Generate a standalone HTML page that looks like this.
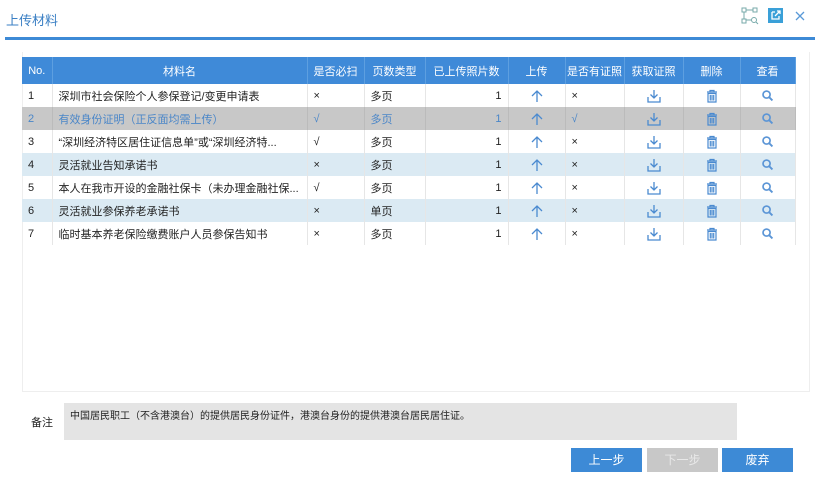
<!DOCTYPE html>
<html><head><meta charset="utf-8"><style>
*{margin:0;padding:0;box-sizing:border-box}
body{width:821px;height:487px;background:#fff;font-family:"Liberation Sans","Noto Sans CJK SC",sans-serif;font-size:11px;color:#222;position:relative;overflow:hidden}
.title{position:absolute;left:6px;top:10px;font-size:13px;color:#3a7fc4}
.line{position:absolute;left:5px;top:37px;width:810px;height:3px;background:#3d8ad6}
.box{position:absolute;left:22px;top:52px;width:788px;height:340px;border:1px solid #eee;border-top:none}
table{position:absolute;left:22px;top:57px;width:773px;border-collapse:collapse;table-layout:fixed}
th{background:#3f8ad8;color:#fff;font-weight:normal;height:27px;font-size:11px;border-right:1px solid #5d9fe0}
td{height:23px;border-right:1px solid #e6e6e6;padding-left:6px;white-space:nowrap;overflow:hidden}
tr.g td{background:#c8c8c8;color:#4a86c8;border-right-color:#bbb}
tr.b td{background:#dbeaf3}
td.c{text-align:center;padding:0}
td.c svg{display:block;margin:0 auto}
td.r{text-align:right;padding-right:6px}
.note-l{position:absolute;left:31px;top:414px;font-size:11px}
.note{position:absolute;left:64px;top:403px;width:673px;height:37px;background:#e4e4e4;padding:4px 6px;font-size:10px}
.btn{position:absolute;top:448px;width:71px;height:24px;color:#fff;text-align:center;line-height:24px;font-size:12px;background:#3d8ad6}
</style></head><body>
<svg width="0" height="0" style="position:absolute"><defs>
<symbol id="up" viewBox="0 0 14 14"><path d="M7 13V2M2 7l5-5 5 5" fill="none" stroke="#4a8ad0" stroke-width="1.3"/></symbol>
<symbol id="dl" viewBox="0 0 14 14"><path d="M7 1v8M3.5 5.5L7 9l3.5-3.5M1 8v5h12V8" fill="none" stroke="#4a8ad0" stroke-width="1.3"/></symbol>
<symbol id="tr" viewBox="0 0 14 14"><path d="M2 3h10M5 3V1.5h4V3M3 4.5h8V13H3zM5.3 6v5.5M7 6v5.5M8.7 6v5.5" fill="none" stroke="#4a8ad0" stroke-width="1.2"/></symbol>
<symbol id="sr" viewBox="0 0 14 14"><circle cx="6" cy="6" r="3.8" fill="none" stroke="#5b95d6" stroke-width="1.8"/><path d="M8.8 8.8l3.5 3.5" stroke="#5b95d6" stroke-width="2"/></symbol>
</defs></svg>
<div class="title">上传材料</div>
<svg style="position:absolute;left:741px;top:7px" width="18" height="18" viewBox="0 0 18 18"><rect x="1" y="1" width="4" height="4" fill="none" stroke="#7aa" /><rect x="12" y="1" width="4" height="4" fill="none" stroke="#7aa"/><rect x="1" y="12" width="4" height="4" fill="none" stroke="#7aa"/><circle cx="13" cy="13" r="2.5" fill="none" stroke="#7aa"/><path d="M5 3h7M3 5v7M5 13h5M15 15l2 2" stroke="#7aa" fill="none"/></svg>
<svg style="position:absolute;left:768px;top:8px" width="15" height="15" viewBox="0 0 15 15"><rect width="15" height="15" fill="#3aa0d8"/><path d="M4 4h3M4 4v7h7V8M7 8l5-5M9 3h3v3" stroke="#fff" fill="none" stroke-width="1.3"/></svg>
<svg style="position:absolute;left:795px;top:11px" width="10" height="10" viewBox="0 0 10 10"><path d="M1 1l8 8M9 1l-8 8" stroke="#5a9ad8" stroke-width="1.3"/></svg>
<div class="line"></div>
<div class="box"></div>
<table>
<colgroup><col style="width:30px"><col style="width:255px"><col style="width:57px"><col style="width:61px"><col style="width:83px"><col style="width:57px"><col style="width:59px"><col style="width:59px"><col style="width:57px"><col style="width:55px"></colgroup>
<tr><th>No.</th><th>材料名</th><th>是否必扫</th><th>页数类型</th><th>已上传照片数</th><th>上传</th><th>是否有证照</th><th>获取证照</th><th>删除</th><th>查看</th></tr>
<tr><td>1</td><td>深圳市社会保险个人参保登记/变更申请表</td><td>×</td><td>多页</td><td class="r">1</td><td class="c"><svg width="14" height="14"><use href="#up"/></svg></td><td>×</td><td class="c"><svg width="14" height="14"><use href="#dl"/></svg></td><td class="c"><svg width="14" height="14"><use href="#tr"/></svg></td><td class="c"><svg width="13" height="13"><use href="#sr"/></svg></td></tr>
<tr class="g"><td>2</td><td>有效身份证明（正反面均需上传）</td><td>√</td><td>多页</td><td class="r">1</td><td class="c"><svg width="14" height="14"><use href="#up"/></svg></td><td>√</td><td class="c"><svg width="14" height="14"><use href="#dl"/></svg></td><td class="c"><svg width="14" height="14"><use href="#tr"/></svg></td><td class="c"><svg width="13" height="13"><use href="#sr"/></svg></td></tr>
<tr><td>3</td><td>“深圳经济特区居住证信息单”或“深圳经济特...</td><td>√</td><td>多页</td><td class="r">1</td><td class="c"><svg width="14" height="14"><use href="#up"/></svg></td><td>×</td><td class="c"><svg width="14" height="14"><use href="#dl"/></svg></td><td class="c"><svg width="14" height="14"><use href="#tr"/></svg></td><td class="c"><svg width="13" height="13"><use href="#sr"/></svg></td></tr>
<tr class="b"><td>4</td><td>灵活就业告知承诺书</td><td>×</td><td>多页</td><td class="r">1</td><td class="c"><svg width="14" height="14"><use href="#up"/></svg></td><td>×</td><td class="c"><svg width="14" height="14"><use href="#dl"/></svg></td><td class="c"><svg width="14" height="14"><use href="#tr"/></svg></td><td class="c"><svg width="13" height="13"><use href="#sr"/></svg></td></tr>
<tr><td>5</td><td>本人在我市开设的金融社保卡（未办理金融社保...</td><td>√</td><td>多页</td><td class="r">1</td><td class="c"><svg width="14" height="14"><use href="#up"/></svg></td><td>×</td><td class="c"><svg width="14" height="14"><use href="#dl"/></svg></td><td class="c"><svg width="14" height="14"><use href="#tr"/></svg></td><td class="c"><svg width="13" height="13"><use href="#sr"/></svg></td></tr>
<tr class="b"><td>6</td><td>灵活就业参保养老承诺书</td><td>×</td><td>单页</td><td class="r">1</td><td class="c"><svg width="14" height="14"><use href="#up"/></svg></td><td>×</td><td class="c"><svg width="14" height="14"><use href="#dl"/></svg></td><td class="c"><svg width="14" height="14"><use href="#tr"/></svg></td><td class="c"><svg width="13" height="13"><use href="#sr"/></svg></td></tr>
<tr><td>7</td><td>临时基本养老保险缴费账户人员参保告知书</td><td>×</td><td>多页</td><td class="r">1</td><td class="c"><svg width="14" height="14"><use href="#up"/></svg></td><td>×</td><td class="c"><svg width="14" height="14"><use href="#dl"/></svg></td><td class="c"><svg width="14" height="14"><use href="#tr"/></svg></td><td class="c"><svg width="13" height="13"><use href="#sr"/></svg></td></tr>
</table>
<div class="note-l">备注</div>
<div class="note">中国居民职工（不含港澳台）的提供居民身份证件，港澳台身份的提供港澳台居民居住证。</div>
<div class="btn" style="left:571px">上一步</div>
<div class="btn" style="left:647px;background:#c8c8c8;color:#e8e8e8">下一步</div>
<div class="btn" style="left:722px">废弃</div>
</body></html>
